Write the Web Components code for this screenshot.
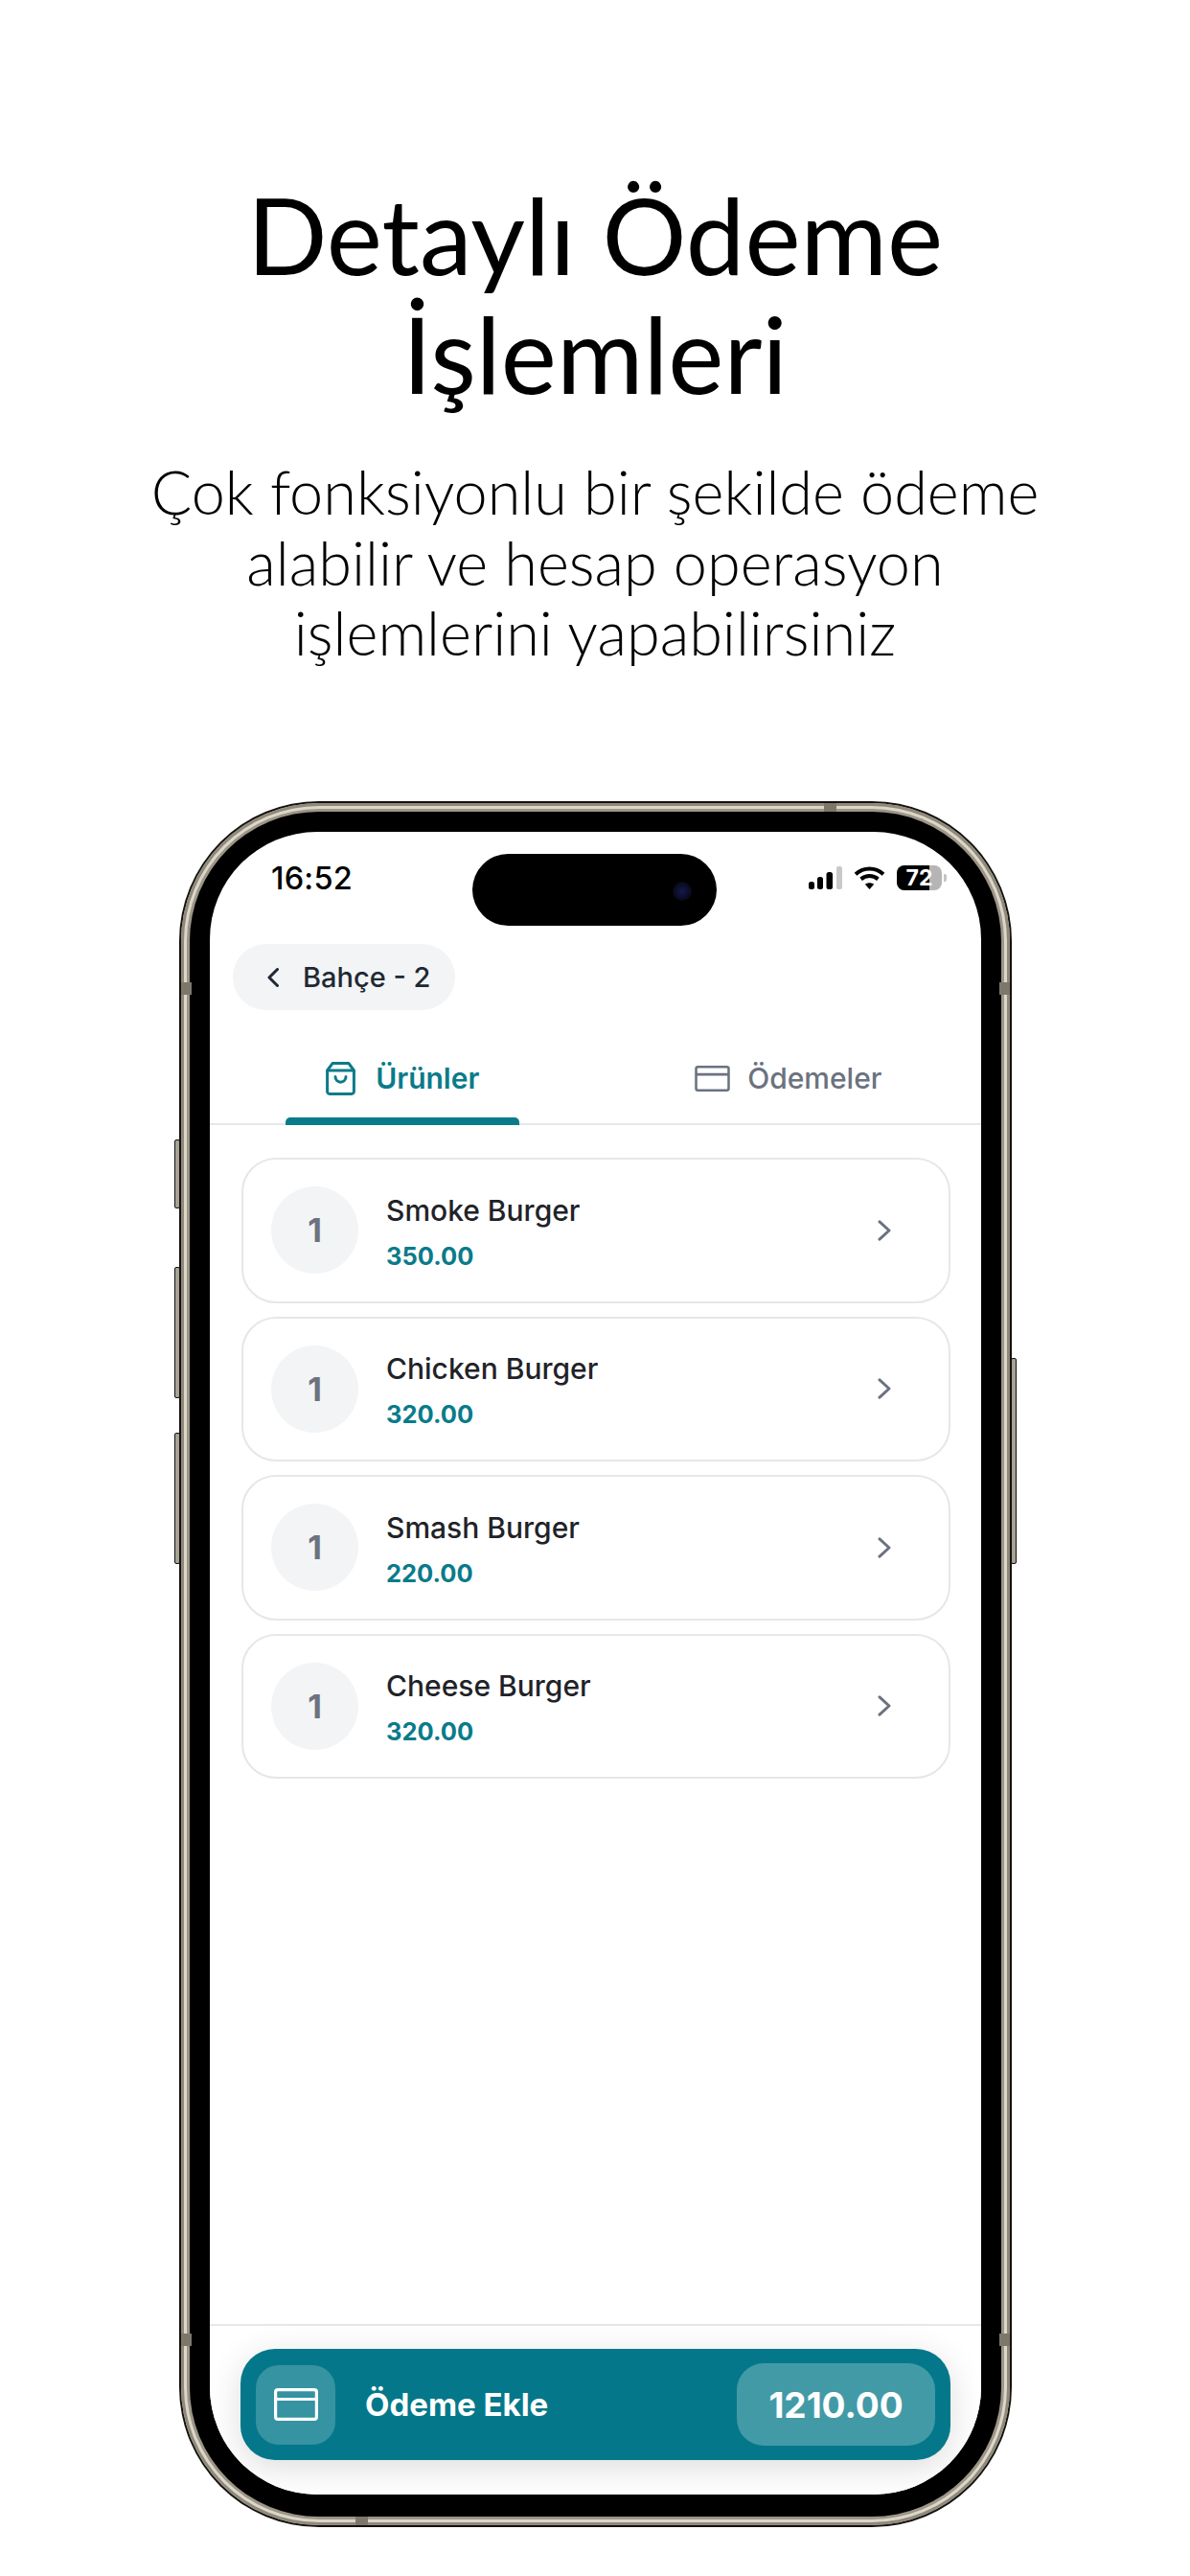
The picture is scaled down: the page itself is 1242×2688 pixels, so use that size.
<!DOCTYPE html>
<html lang="tr">
<head>
<meta charset="utf-8">
<title>Detaylı Ödeme İşlemleri</title>
<style>
  html, body { margin: 0; background: #fff; }
  body { width: 1242px; height: 2688px; overflow: hidden; font-family: "Inter", "Liberation Sans", sans-serif; }
</style>
</head>
<body>
<promo-page>
  <span slot="title">Detaylı Ödeme<br>İşlemleri</span>
  <span slot="subtitle">Çok fonksiyonlu bir şekilde ödeme<br>alabilir ve hesap operasyon<br>işlemlerini yapabilirsiniz</span>
  <phone-frame>
    <status-bar time="16:52" battery="72"></status-bar>
    <back-pill label="Bahçe - 2"></back-pill>
    <tab-bar></tab-bar>
    <product-list>
      <product-row qty="1" name="Smoke Burger" price="350.00"></product-row>
      <product-row qty="1" name="Chicken Burger" price="320.00"></product-row>
      <product-row qty="1" name="Smash Burger" price="220.00"></product-row>
      <product-row qty="1" name="Cheese Burger" price="320.00"></product-row>
    </product-list>
    <pay-footer label="Ödeme Ekle" amount="1210.00"></pay-footer>
  </phone-frame>
</promo-page>

<script>
const cardIcon = (color, w, h) => `
  <svg width="${w}" height="${h}" viewBox="0 0 46 34" fill="none" stroke="${color}" stroke-width="3.2" stroke-linejoin="round">
    <rect x="1.6" y="1.6" width="42.8" height="30.8" rx="2.5"/>
    <path d="M1.6 11.5h42.8"/>
  </svg>`;

class PromoPage extends HTMLElement {
  constructor() {
    super();
    this.attachShadow({ mode: "open" });
    this.shadowRoot.innerHTML = `
      <style>
        :host { display: flex; flex-direction: column; align-items: center; width: 1242px; height: 2688px; color: #000; font-family: "Lato", "Liberation Sans", sans-serif; }
        h1 { margin: 182px 0 0; font-size: 110px; line-height: 124px; font-weight: 400; text-align: center; }
        p { margin: 46px 0 0; font-size: 63px; line-height: 73.5px; font-weight: 300; text-align: center; }
        .device { margin: 139.5px 0 0 1px; }
      </style>
      <h1><slot name="title"></slot></h1>
      <p><slot name="subtitle"></slot></p>
      <div class="device"><slot></slot></div>
    `;
  }
}

class PhoneFrame extends HTMLElement {
  constructor() {
    super();
    this.attachShadow({ mode: "open" });
    this.shadowRoot.innerHTML = `
      <style>
        :host { display: block; position: relative; width: 869px; height: 1801px; }
        .outer { box-sizing: border-box; width: 100%; height: 100%; padding: 2px; border-radius: 146px; background: #14120f; }
        .metal { box-sizing: border-box; width: 100%; height: 100%; padding: 9px; border-radius: 144px; background: #dcd6c9; box-shadow: inset 0 0 0 3px #8f897b; }
        .bezel { box-sizing: border-box; width: 100%; height: 100%; padding: 21px 21px 23px; border-radius: 135px; background: #000; box-shadow: 0 0 0 3px #9c9688; }
        .screen { position: relative; display: flex; flex-direction: column; width: 100%; height: 100%; border-radius: 112px; background: #fff; overflow: hidden; font-family: "Inter", "Liberation Sans", sans-serif; }
        .island { position: absolute; left: 274px; top: 23px; width: 255px; height: 75px; border-radius: 38px; background: #000; }
        .island i { position: absolute; left: 209px; top: 29px; width: 20px; height: 20px; border-radius: 50%; background: radial-gradient(circle, #141a4a 0, #0a0c24 55%, #000 100%); }
        .btn { position: absolute; width: 6px; background: #a8a294; border: 1px solid #14120f; border-radius: 2px; box-sizing: border-box; }
        .band { position: absolute; background: #7d776a; }
      </style>
      <div class="btn" style="left:-5px;top:353px;height:72px"></div>
      <div class="btn" style="left:-5px;top:486px;height:137px"></div>
      <div class="btn" style="left:-5px;top:659px;height:137px"></div>
      <div class="btn" style="right:-5px;top:581px;height:215px"></div>
      <div class="outer"><div class="metal"><div class="bezel">
        <div class="screen">
          <slot></slot>
          <div class="island"><i></i></div>
        </div>
      </div></div></div>
      <div class="band" style="left:2px;top:189px;width:11px;height:13px"></div>
      <div class="band" style="right:2px;top:189px;width:11px;height:13px"></div>
      <div class="band" style="left:2px;bottom:189px;width:11px;height:13px"></div>
      <div class="band" style="right:2px;bottom:189px;width:11px;height:13px"></div>
      <div class="band" style="left:673px;top:2px;width:13px;height:9px"></div>
      <div class="band" style="left:184px;bottom:2px;width:13px;height:9px"></div>
    `;
  }
}

class StatusBar extends HTMLElement {
  constructor() {
    super();
    this.attachShadow({ mode: "open" });
  }
  connectedCallback() {
    const time = this.getAttribute("time") || "";
    const battery = this.getAttribute("battery") || "";
    this.shadowRoot.innerHTML = `
      <style>
        :host { display: flex; justify-content: space-between; align-items: center; flex: none; height: 96px; padding: 0 36px 0 64px; box-sizing: border-box; }
        .time { font-size: 32.5px; font-weight: 500; color: #000; letter-spacing: 0.2px; }
        .icons { display: flex; align-items: center; gap: 12px; }
        .battery { position: relative; width: 47px; height: 26px; border-radius: 8px; overflow: hidden; background: #b5b5b5; color: #fff; font-size: 23px; font-weight: 700; line-height: 26px; text-align: center; }
        .battery::before { content: ""; position: absolute; left: 0; top: 0; bottom: 0; width: 34px; background: #000; }
        .battery span { position: relative; }
        .wrap { display: flex; align-items: center; gap: 2px; }
        .tip { width: 3px; height: 8px; border-radius: 0 2px 2px 0; background: #c4c4c4; }
      </style>
      <span class="time">${time}</span>
      <div class="icons">
        <svg width="35" height="24" viewBox="0 0 35 24">
          <rect x="0" y="16" width="6" height="8" rx="2.5" fill="#000"/>
          <rect x="9" y="11" width="6" height="13" rx="2.5" fill="#000"/>
          <rect x="18.5" y="6" width="6.5" height="18" rx="2.5" fill="#000"/>
          <rect x="29" y="0" width="6" height="24" rx="2" fill="#c9c9c9"/>
        </svg>
        <svg width="33" height="24" viewBox="0 0 33 24" fill="none" stroke="#000" stroke-width="4" stroke-linecap="butt">
          <path d="M2 8.2C10.4 .6 22.6 .6 31 8.2"/>
          <path d="M7.6 13.4c5.2-4.4 12.6-4.4 17.8 0"/>
          <path d="M16.5 24l-4.6-5.2c2.7-2 6.5-2 9.2 0z" fill="#000" stroke="none"/>
        </svg>
        <div class="wrap">
          <div class="battery"><span>${battery}</span></div>
          <div class="tip"></div>
        </div>
      </div>
    `;
  }
}

class BackPill extends HTMLElement {
  constructor() {
    super();
    this.attachShadow({ mode: "open" });
  }
  connectedCallback() {
    this.shadowRoot.innerHTML = `
      <style>
        :host { display: flex; flex: none; align-self: flex-start; align-items: center; gap: 25px; margin: 21px 0 0 24px; padding: 0 26px 0 36px; height: 69px; border-radius: 35px; background: #f3f4f6; color: #1f2933; font-size: 29px; font-weight: 500; }
      </style>
      <svg width="12" height="20" viewBox="0 0 12 20" fill="none" stroke="#1f2933" stroke-width="3" stroke-linecap="round" stroke-linejoin="round"><path d="M10.5 1.5L2 10l8.5 8.5"/></svg>
      <span>${this.getAttribute("label") || ""}</span>
    `;
  }
}

class TabBar extends HTMLElement {
  constructor() {
    super();
    this.attachShadow({ mode: "open" });
    this.shadowRoot.innerHTML = `
      <style>
        :host { display: grid; grid-template-columns: 1fr 1fr; flex: none; height: 122px; margin-top: -2px; border-bottom: 2px solid #e5e7eb; box-sizing: border-box; }
        .tab { position: relative; display: flex; align-items: center; justify-content: center; gap: 18px; padding-top: 26px; box-sizing: border-box; font-size: 30px; color: #6b7280; font-weight: 500; }
        .tab.on { color: #0a7b8a; font-weight: 600; gap: 21px; }
        .tab.on::after { content: ""; position: absolute; left: 79px; right: 80px; bottom: -2px; height: 8px; border-radius: 5px 5px 0 0; background: #0a7b8a; }
      </style>
      <div class="tab on">
        <svg width="31" height="35" viewBox="0 0 31 35" fill="none" stroke="#0a7b8a" stroke-width="3" stroke-linecap="round" stroke-linejoin="round">
          <path d="M7 1.6h17L29.4 9v22a2.4 2.4 0 0 1-2.4 2.4H4A2.4 2.4 0 0 1 1.6 31V9z"/>
          <path d="M1.8 9h27.4"/>
          <path d="M10 15.5c0 7.5 11 7.5 11 0"/>
        </svg>
        <span>Ürünler</span>
      </div>
      <div class="tab">
        ${cardIcon("#6b7280", 37, 27)}
        <span>Ödemeler</span>
      </div>
    `;
  }
}

class ProductList extends HTMLElement {
  constructor() {
    super();
    this.attachShadow({ mode: "open" });
    this.shadowRoot.innerHTML = `
      <style>
        :host { display: flex; flex-direction: column; flex: 1; gap: 14px; padding: 34px 32px 0 33px; box-sizing: border-box; min-height: 0; }
      </style>
      <slot></slot>
    `;
  }
}

class ProductRow extends HTMLElement {
  constructor() {
    super();
    this.attachShadow({ mode: "open" });
  }
  connectedCallback() {
    this.shadowRoot.innerHTML = `
      <style>
        :host { display: flex; align-items: center; gap: 29px; flex: none; box-sizing: border-box; height: 151.5px; padding: 0 60px 0 29px; border: 2px solid #e5e7eb; border-radius: 36px; background: #fff; }
        .qty { display: flex; align-items: center; justify-content: center; flex: none; width: 91px; height: 91px; border-radius: 50%; background: #f3f4f6; color: #6b7280; font-size: 34px; font-weight: 700; }
        .info { flex: 1; display: flex; flex-direction: column; gap: 12px; padding-top: 4px; }
        .name { font-size: 30px; line-height: 38px; font-weight: 500; color: #1f2328; }
        .price { font-size: 25.5px; line-height: 34px; font-weight: 700; color: #0a7b8a; }
      </style>
      <div class="qty">${this.getAttribute("qty")}</div>
      <div class="info">
        <div class="name">${this.getAttribute("name")}</div>
        <div class="price">${this.getAttribute("price")}</div>
      </div>
      <svg width="14" height="22" viewBox="0 0 14 22" fill="none" stroke="#6b7280" stroke-width="3" stroke-linecap="round" stroke-linejoin="round"><path d="M2 1.8L12 11 2 20.2"/></svg>
    `;
  }
}

class PayFooter extends HTMLElement {
  constructor() {
    super();
    this.attachShadow({ mode: "open" });
  }
  connectedCallback() {
    this.shadowRoot.innerHTML = `
      <style>
        :host { display: block; flex: none; box-sizing: border-box; height: 178px; padding: 24px 32px 0; border-top: 2px solid #e5e7eb; background: #fff; }
        .btn { display: flex; align-items: center; height: 116px; padding: 0 16px; box-sizing: border-box; border-radius: 36px; background: #04788a; color: #fff; box-shadow: 0 8px 36px rgba(0,0,0,.14); }
        .ico { display: flex; align-items: center; justify-content: center; flex: none; width: 83px; height: 83px; border-radius: 24px; background: rgba(255,255,255,.2); }
        .label { flex: 1; margin-left: 31px; font-size: 33px; font-weight: 700; }
        .amount { display: flex; align-items: center; justify-content: center; flex: none; width: 207px; height: 86px; border-radius: 28px; background: rgba(255,255,255,.25); font-size: 37px; font-weight: 700; }
      </style>
      <div class="btn">
        <div class="ico">${cardIcon("#fff", 46, 34)}</div>
        <span class="label">${this.getAttribute("label")}</span>
        <div class="amount">${this.getAttribute("amount")}</div>
      </div>
    `;
  }
}

customElements.define("promo-page", PromoPage);
customElements.define("phone-frame", PhoneFrame);
customElements.define("status-bar", StatusBar);
customElements.define("back-pill", BackPill);
customElements.define("tab-bar", TabBar);
customElements.define("product-list", ProductList);
customElements.define("product-row", ProductRow);
customElements.define("pay-footer", PayFooter);
</script>
</body>
</html>
